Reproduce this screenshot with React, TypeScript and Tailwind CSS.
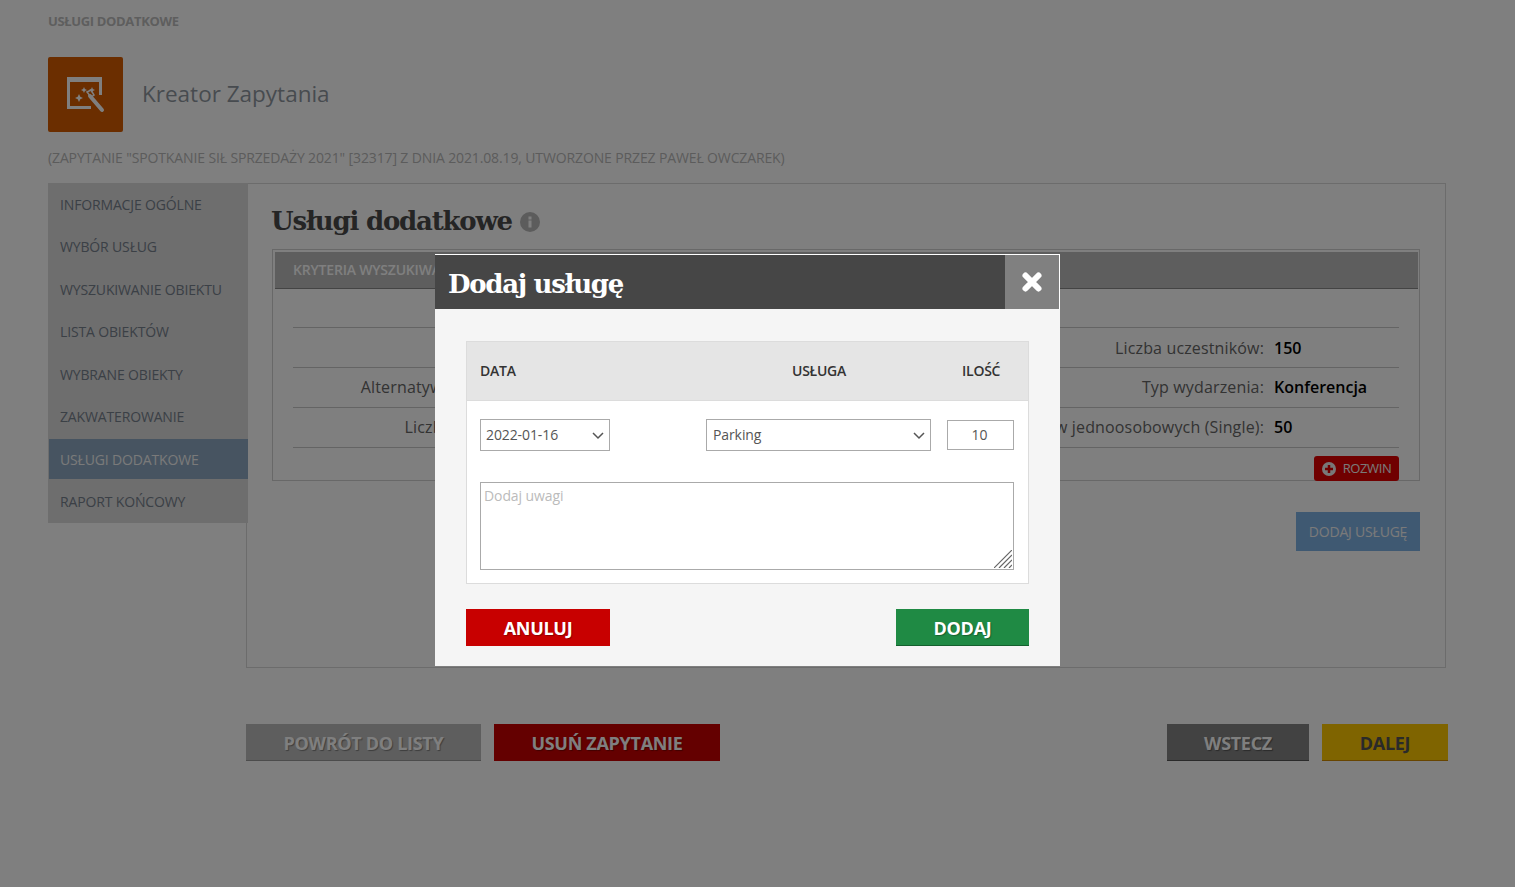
const navItems = [
  "INFORMACJE OGÓLNE",
  "WYBÓR USŁUG",
  "WYSZUKIWANIE OBIEKTU",
  "LISTA OBIEKTÓW",
  "WYBRANE OBIEKTY",
  "ZAKWATEROWANIE",
  "USŁUGI DODATKOWE",
  "RAPORT KOŃCOWY",
];

const criteria = [
  { left: "", right: "Liczba uczestników:", value: "150" },
  { left: "Alternatywny:", right: "Typ wydarzenia:", value: "Konferencja" },
  { left: "Liczba:", right: "Liczba pokojów jednoosobowych (Single):", value: "50" },
];

function WizardIcon() {
  return (
    <svg width="38" height="36" viewBox="0 0 38 36" fill="#fff">
      <path d="M0 0h35v18h-3V5H3v24h21v3H0z" />
      <path d="M23 19l12 14" stroke="#fff" strokeWidth="4" strokeLinecap="round" />
      <path d="M20 15l4-2 3 5-3 2z" fill="none" stroke="#fff" strokeWidth="1.500" />
      <path d="M12 17l1.300 2.700L16 21l-2.700 1.300L12 25l-1.300-2.700L8 21l2.700-1.300z" />
      <path d="M17 10l.9 2.100L20 13l-2.100.9L17 16l-.9-2.100L14 13l2.100-.9zM25 10l.9 2.100L28 13l-2.100.9L25 16l-.9-2.100L22 13l2.100-.9z" />
    </svg>
  );
}

function Page() {
  return (
    <div className="min-h-[887px] bg-white pl-12 font-['Open_Sans',sans-serif]">
      <div className="pt-3 text-[13px] leading-[18px] font-bold tracking-[-0.35px] text-[#bdbdbd]">USŁUGI DODATKOWE</div>

      <div className="mt-[27px] flex items-center gap-[19px]">
        <div className="flex h-[75px] w-[75px] items-center justify-center rounded-[2px] bg-[#d65c00]">
          <WizardIcon />
        </div>
        <div className="pb-px text-[22.500px] text-[#8f979f]">Kreator Zapytania</div>
      </div>

      <div className="mt-[17px] text-[14px] leading-[18px] tracking-[-0.13px] text-[#b8b8b8]">
        (ZAPYTANIE "SPOTKANIE SIŁ SPRZEDAŻY 2021" [32317] Z DNIA 2021.08.19, UTWORZONE PRZEZ PAWEŁ OWCZAREK)
      </div>

      <div className="mt-4 flex items-start">
        <div className="relative flex h-[340px] w-[200px] shrink-0 flex-col bg-[#dcdcdc] text-[14px] tracking-[-0.15px] text-[#76808c]">
          {navItems.map((item) =>
            item === "USŁUGI DODATKOWE" ? (
              <div key={item} className="my-[1.250px] ml-px flex h-[40px] items-center bg-[#8ea8c2] pl-[11px] text-[#f4f4f4]">
                {item}
              </div>
            ) : (
              <div key={item} className="flex h-[42.500px] items-center pl-3">
                {item}
              </div>
            ),
          )}
        </div>

        <div className="-ml-0.5 h-[485px] w-[1200px] border border-[#d8d8d8] pr-[25px] pl-[25px]">
          <div className="mt-[18px] flex items-center gap-2">
            <h1 className="-ml-px font-['DejaVu_Serif',serif] text-[26px] leading-[38px] font-bold tracking-[-1.200px] text-[#4a4a4a]">
              Usługi dodatkowe
            </h1>
            <svg width="20" height="20" viewBox="0 0 20 20" className="mt-[2px]">
              <circle cx="10" cy="10" r="10" fill="#b8b8b8" />
              <rect x="8.500" y="8.500" width="3" height="7" fill="#fff" />
              <rect x="8.500" y="4.500" width="3" height="3" fill="#fff" />
            </svg>
          </div>

          <div className="mt-[9px] h-[232px] w-[1148px] border border-[#d0d0d0] pt-0.5 pr-px pl-0.5">
            <div className="flex h-[37px] items-center border-b border-[#888] bg-[#bcbcbc] pb-0.5 pl-[18px] text-[14px] font-semibold tracking-[-0.2px] text-white">
              KRYTERIA WYSZUKIWANIA
            </div>
            <div className="mt-[38px] mr-[19px] ml-[18px] border-t border-[#c8c8c8]">
              {criteria.map((row, i) => (
                <div key={row.right} className={i === 0 ? "flex h-10 items-center border-b border-[#c8c8c8] text-[16px] tracking-[0.15px] text-[#666]" : "flex h-10 items-center border-b border-[#c8c8c8] pb-px text-[16px] tracking-[0.15px] text-[#666]"}>
                  <div className={i === 1 ? "w-[553px] pr-[381px] text-right whitespace-nowrap" : "w-[553px] pr-[390px] text-right whitespace-nowrap"}>{row.left}</div>
                  <div className="flex-1 text-right whitespace-nowrap">{row.right}</div>
                  <div className="w-[135px] pl-[10px] font-semibold tracking-normal text-black">{row.value}</div>
                </div>
              ))}
            </div>
            <div className="mt-2 mr-[19px] ml-[18px] flex justify-end">
              <div className="flex h-[25px] w-[85px] items-center justify-center gap-[7px] rounded-[3px] bg-[#e00000] text-[13px] tracking-[-0.4px] text-[#f4f4f4]">
                <svg width="14" height="14" viewBox="0 0 14 14">
                  <circle cx="7" cy="7" r="7" fill="#f0f0f0" />
                  <rect x="3" y="5.750" width="8" height="2.500" fill="#e00000" />
                  <rect x="5.750" y="3" width="2.500" height="8" fill="#e00000" />
                </svg>
                ROZWIN
              </div>
            </div>
          </div>

          <div className="mt-[31px] flex w-[1148px] justify-end">
            <div className="flex h-[39px] w-[124px] items-center justify-center bg-[#7fb2e5] text-[14px] tracking-[-0.2px] text-[#f4f4f4]">
              DODAJ USŁUGĘ
            </div>
          </div>
        </div>
      </div>

      <div className="mt-14 ml-[198px] flex w-[1202px] gap-[13px] text-[18px] font-bold tracking-[-0.3px] text-white [text-shadow:1px_1px_1px_rgba(0,0,0,0.35)]">
        <div className="flex h-[37px] w-[235px] items-center justify-center border-b border-[#999] bg-[#bdbdbd] pt-0.5">POWRÓT DO LISTY</div>
        <div className="flex h-[37px] w-[226px] items-center justify-center bg-[#c80000] pt-px">USUŃ ZAPYTANIE</div>
        <div className="ml-auto flex h-[37px] w-[142px] items-center justify-center border-b border-[#555] bg-[#848484] pt-0.5">WSTECZ</div>
        <div className="flex h-[37px] w-[126px] items-center justify-center border-b border-[#d08a00] bg-[#ffc800] pt-0.5 text-[#555] [text-shadow:none]">DALEJ</div>
      </div>
    </div>
  );
}

function Chevron() {
  return (
    <svg width="12" height="8" viewBox="0 0 12 8" fill="none" className="pointer-events-none absolute top-[13px] right-[6px]">
      <path d="M1 1l5 5 5-5" stroke="#555" strokeWidth="1.500" />
    </svg>
  );
}

function Modal() {
  return (
    <div className="fixed inset-0 bg-black/50 pt-[254px] pl-[435px] font-['Open_Sans',sans-serif]">
      <div className="h-[412px] w-[625px] bg-[#f5f5f5]">
        <div className="flex h-[55px] items-center justify-between border-t border-r border-white bg-[#464646]">
          <div className="pt-[3px] pl-[13px] font-['DejaVu_Serif',serif] text-[26px] leading-[36px] font-bold tracking-[-1.300px] text-white">
            Dodaj usługę
          </div>
          <div className="flex h-[54px] w-[54px] items-center justify-center bg-[#808080]">
            <svg width="22" height="22" viewBox="0 0 22 22" className="mb-[1px]">
              <path d="M4.500 4.500l13 13M17.500 4.500l-13 13" stroke="#fff" strokeWidth="6" strokeLinecap="round" />
            </svg>
          </div>
        </div>

        <div className="mx-[31px] mt-8 h-[243px] border border-[#dcdcdc] bg-white">
          <div className="flex h-[59px] items-center border-b border-[#dcdcdc] bg-[#e5e5e5] pb-0.5 text-[14px] font-semibold tracking-[-0.25px] text-[#333]">
            <div className="w-[325px] pl-[13px]">DATA</div>
            <div className="w-[170px]">USŁUGA</div>
            <div>ILOŚĆ</div>
          </div>
          <div className="flex items-center px-[13px] pt-[18px] text-[14px] text-[#555]">
            <div className="relative h-8 w-[130px]">
              <select defaultValue="2022-01-16" className="h-8 w-full appearance-none rounded-none border border-[#aaa] bg-white pb-0.5 pl-[5px] text-[14px] tracking-[-0.1px] text-[#555]">
                <option>2022-01-16</option>
              </select>
              <Chevron />
            </div>
            <div className="relative ml-24 h-8 w-[225px]">
              <select defaultValue="Parking" className="h-8 w-full appearance-none rounded-none border border-[#aaa] bg-white pb-0.5 pl-[6px] text-[14px] tracking-[-0.1px] text-[#555]">
                <option>Parking</option>
              </select>
              <Chevron />
            </div>
            <input defaultValue="10" className="ml-4 h-[30px] w-[67px] border border-[#aaa] pr-0.5 pb-0.5 text-center text-[14px] text-[#555]" />
          </div>
          <div className="px-[13px] pt-[31px]">
            <div className="relative h-[88px] w-[534px]">
              <textarea
                placeholder="Dodaj uwagi"
                className="block h-full w-full resize-none border border-[#aaa] px-[3px] py-[2px] text-[14px] tracking-[-0.1px] placeholder:text-[#bbb]"
              />
              <svg width="18" height="18" viewBox="0 0 18 18" fill="none" className="absolute right-[2px] bottom-[2px]" stroke="#666" strokeWidth="1.200">
                <path d="M0 18L18 0M5 18L18 5M10 18l8-8M15 18l3-3" />
              </svg>
            </div>
          </div>
        </div>

        <div className="mx-[31px] mt-[25px] flex justify-between text-[18px] font-bold tracking-[-0.3px] text-white [text-shadow:1px_1px_1px_rgba(0,0,0,0.3)]">
          <div className="flex h-[37px] w-[144px] items-center justify-center bg-[#c80000] pt-px">ANULUJ</div>
          <div className="flex h-[37px] w-[133px] items-center justify-center border-b border-[#14602e] bg-[#1f8a44] pt-0.5">DODAJ</div>
        </div>
      </div>
    </div>
  );
}

export default function App() {
  return (
    <>
      <Page />
      <Modal />
    </>
  );
}
